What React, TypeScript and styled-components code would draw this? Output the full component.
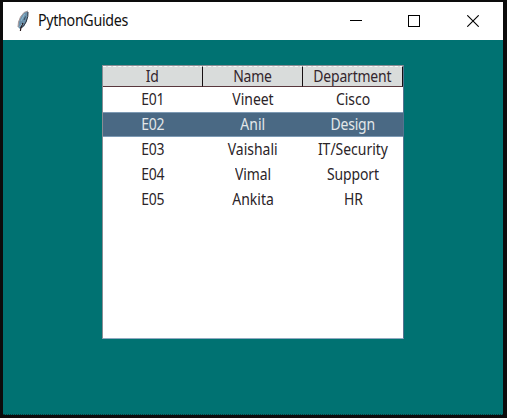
import React from "react";
import styled, { createGlobalStyle } from "styled-components";

const GlobalStyle = createGlobalStyle`
  * { box-sizing: border-box; }
  body { margin: 0; background: #0c0c0c; font-family: "Noto Sans", "Open Sans", sans-serif; }
`;

const Screen = styled.div`
  width: 507px;
  height: 418px;
  padding: 2px 4px 3px 3px;
  background: #0c0c0c;
`;

const Window = styled.main`
  display: flex;
  flex-direction: column;
  height: 413px;
  background: #007272;
`;

const TitleBar = styled.header`
  display: flex;
  align-items: center;
  height: 38px;
  padding-left: 13px;
  background: #fff;
`;

const Title = styled.h1`
  flex: 1;
  margin: 0 0 0 6px;
  padding-bottom: 2px;
  font-size: 15.5px;
  line-height: 20px;
  font-weight: 400;
  letter-spacing: -0.35px;
  color: #111;
  transform: scaleX(0.92);
  transform-origin: left;
`;

const Controls = styled.div`
  display: flex;
`;

const ControlButton = styled.button`
  width: 58px;
  height: 38px;
  padding: 0;
  border: 0;
  background: none;
  display: grid;
  place-items: center;

  &:last-child { width: 60px; }
`;

const Content = styled.section`
  flex: 1;
  padding: 25px 0 0 99px;
  border-bottom: 1px dotted #063c3c;
`;

const Tree = styled.div`
  width: 302px;
  height: 274px;
  border: 1px solid #8a8d94;
  border-bottom-color: #8fa9c0;
  border-right-color: #53738f;
  background: #fff;
`;

const HeaderRow = styled.div`
  display: grid;
  grid-template-columns: repeat(3, 100px);
  height: 21px;
`;

const HeaderCell = styled.div`
  border-top: 1px dashed #f8f8f8;
  border-right: 1px solid #171012;
  border-bottom: 1px solid #59383d;
  background: #d9dcdb;
  line-height: 19px;
  text-align: center;
  color: #33262d;
`;

const Row = styled.div<{ $selected: boolean }>`
  display: grid;
  grid-template-columns: repeat(3, 100px);
  height: 25px;
  background: ${(p) => (p.$selected ? "#4a6984" : "#fff")};
  color: ${(p) => (p.$selected ? "#e3e7e9" : "#2b2428")};
  box-shadow: ${(p) => (p.$selected ? "inset 0 1px #7d9ab4, inset 0 -1px #7d9ab4" : "none")};
`;

const Cell = styled.div`
  line-height: 25px;
  text-align: center;
  white-space: nowrap;
`;

const Label = styled.span<{ $tracking: number }>`
  display: inline-block;
  height: 19px;
  font-size: 15.5px;
  line-height: inherit;
  letter-spacing: ${(p) => p.$tracking}px;
  transform: scaleX(0.9);
`;

type Entry = [text: string, tracking: number];

const columns: Entry[] = [["Id", -0.1], ["Name", -0.2], ["Department", -0.2]];
const rows: Entry[][] = [
  [["E01", -0.3], ["Vineet", 0]],
  [["E02", -0.3], ["Anil", 0]],
  [["E03", -0.3], ["Vaishali", 0]],
  [["E04", -0.3], ["Vimal", -0.1]],
  [["E05", -0.3], ["Ankita", 0]],
];
const departments: Entry[] = [
  ["Cisco", 0], ["Design", -0.2], ["IT/Security", 0], ["Support", -0.1], ["HR", -0.2],
];

function Feather() {
  return (
    <svg width="16" height="24" viewBox="0 0 16 24" aria-hidden="true">
      <path d="M12 2 8 3.5 4.5 8 2.5 13 2 18 4 20 8 17.5 11 12 12 6Z" fill="#6b91ab" />
      <path d="M12 2 8 3.5 4.5 8 2.5 13 2 18" fill="none" stroke="#a99a9b" />
      <path d="m12 3-.2 4.5L10 13l-2.5 4L5 19" fill="none" stroke="#30343e" />
      <path d="M7 14 5 18 4.4 22" fill="none" stroke="#27191b" strokeWidth="1.2" />
      <path d="M9.5 7.5 8 11" fill="none" stroke="#344858" />
      <path d="M8.5 5 5 12M6 15l-2.5 3" stroke="#90b9d0" />
    </svg>
  );
}

export default function App() {
  return (
    <>
      <GlobalStyle />
      <Screen>
        <Window>
          <TitleBar>
            <Feather />
            <Title>PythonGuides</Title>
            <Controls>
              <ControlButton aria-label="Minimize">
                <svg width="12" height="12"><path d="M0 5.5H12" stroke="#000" /></svg>
              </ControlButton>
              <ControlButton aria-label="Maximize">
                <svg width="12" height="12"><rect x=".5" y=".5" width="11" height="11" fill="none" stroke="#000" /></svg>
              </ControlButton>
              <ControlButton aria-label="Close">
                <svg width="12" height="12"><path d="m.3.3 11.4 11.4M11.7.3.3 11.7" stroke="#000" strokeWidth="1.1" /></svg>
              </ControlButton>
            </Controls>
          </TitleBar>
          <Content>
            <Tree>
              <HeaderRow>
                {columns.map(([text, tracking]) => (
                  <HeaderCell key={text}><Label $tracking={tracking}>{text}</Label></HeaderCell>
                ))}
              </HeaderRow>
              {rows.map((row, index) => (
                <Row key={row[0][0]} $selected={index === 1}>
                  {[...row, departments[index]].map(([text, tracking]) => (
                    <Cell key={text}><Label $tracking={tracking}>{text}</Label></Cell>
                  ))}
                </Row>
              ))}
            </Tree>
          </Content>
        </Window>
      </Screen>
    </>
  );
}
